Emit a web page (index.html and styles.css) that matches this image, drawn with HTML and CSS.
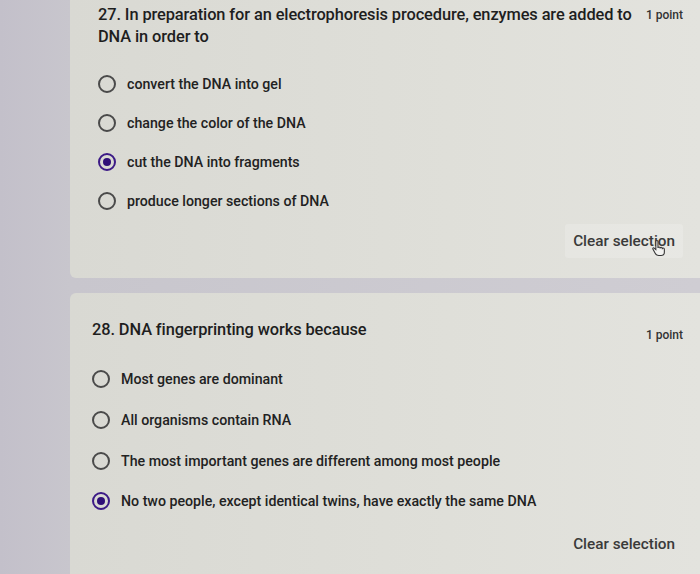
FILE: index.html
```html
<!DOCTYPE html>
<html>
<head>
<meta charset="utf-8">
<link rel="stylesheet" href="styles.css">
</head>
<body>
<div class="page">
  <section class="card card-first">
    <div class="q-head">
      <div class="q-title">27. In preparation for an electrophoresis procedure, enzymes are added to DNA in order to</div>
      <div class="points">1 point</div>
    </div>
    <div class="options">
      <div class="opt"><span class="radio"></span><span class="label">convert the DNA into gel</span></div>
      <div class="opt"><span class="radio"></span><span class="label">change the color of the DNA</span></div>
      <div class="opt"><span class="radio checked"></span><span class="label">cut the DNA into fragments</span></div>
      <div class="opt"><span class="radio"></span><span class="label">produce longer sections of DNA</span></div>
    </div>
    <div class="clear-row">
      <div class="clear hover">Clear selection
        <svg class="cursor" width="15" height="17" viewBox="0 0 14 16"><path d="M4.5 1.5v7.5l-1.6-1.4c-.6-.5-1.5 0-1.2.8l2.3 4.2c.6 1.2 1.8 2 3.2 2h2.3c1.7 0 3-1.3 3-3V8.6c0-.6-.5-1-1-1s-1 .4-1 1V7.9c0-.6-.5-1-1-1s-1 .4-1 1v-.4c0-.6-.5-1-1-1s-1 .4-1 1V1.5c0-.6-.4-1-1-1s-1 .4-1 1z" fill="#f2f2f0" stroke="#333" stroke-width="1"/></svg>
      </div>
    </div>
  </section>
  <section class="card card-second">
    <div class="q-head">
      <div class="q-title">28. DNA fingerprinting works because</div>
      <div class="points low">1 point</div>
    </div>
    <div class="options wide">
      <div class="opt"><span class="radio"></span><span class="label">Most genes are dominant</span></div>
      <div class="opt"><span class="radio"></span><span class="label">All organisms contain RNA</span></div>
      <div class="opt"><span class="radio"></span><span class="label">The most important genes are different among most people</span></div>
      <div class="opt"><span class="radio checked"></span><span class="label">No two people, except identical twins, have exactly the same DNA</span></div>
    </div>
    <div class="clear-row">
      <div class="clear">Clear selection</div>
    </div>
  </section>
</div>
</body>
</html>
```
FILE: styles.css
```css
html, body {
  margin: 0;
  padding: 0;
}
body {
  background: linear-gradient(90deg, #c3c0ca 0%, #c8c6cd 10%, #cfcdd3 100%);
  font-family: Roboto, "Liberation Sans", sans-serif;
  color: #222;
  width: 700px;
  height: 574px;
  overflow: hidden;
}
.page {
  padding-left: 70px;
  display: flex;
  flex-direction: column;
  gap: 15px;
}
.card {
  background: linear-gradient(90deg, #d9d9d3 0%, #dfdfd9 60%, #e3e3de 100%);
  border-radius: 0 0 0 6px;
  box-sizing: border-box;
}
.card-first {
  height: 278px;
  padding: 4px 17px 0 28px;
}
.card-second {
  height: 290px;
  border-radius: 6px 0 0 0;
  padding: 26px 17px 0 22px;
}
.q-head {
  display: flex;
  justify-content: space-between;
  align-items: flex-start;
}
.q-title {
  font-size: 16.4px;
  line-height: 22px;
  font-weight: 500;
  color: #1e1e1e;
  max-width: 545px;
  letter-spacing: -0.1px;
}
.points {
  font-size: 12px;
  line-height: 22px;
  color: #333;
  font-weight: 500;
}
.points.low {
  margin-top: 5px;
}
.options {
  margin-top: 16px;
  display: flex;
  flex-direction: column;
}
.options.wide {
  margin-top: 13px;
}
.opt {
  height: 39px;
  display: flex;
  align-items: center;
  gap: 11px;
}
.options.wide .opt {
  height: 40.7px;
}
.radio {
  width: 14px;
  height: 14px;
  border: 2px solid #4a4a4a;
  border-radius: 50%;
  flex: none;
  position: relative;
}
.radio.checked {
  border-color: #3c1a86;
}
.radio.checked::after {
  content: "";
  position: absolute;
  left: 3px;
  top: 3px;
  width: 8px;
  height: 8px;
  border-radius: 50%;
  background: #2f0f78;
}
.label {
  font-size: 14.2px;
  font-weight: 500;
  color: #222;
}
.clear-row {
  display: flex;
  justify-content: flex-end;
}
.card-first .clear-row {
  margin-top: 4px;
}
.card-second .clear-row {
  margin-top: 5px;
}
.clear {
  position: relative;
  height: 34px;
  line-height: 34px;
  padding: 0 8px;
  font-size: 15.3px;
  font-weight: 500;
  color: #3a3a3a;
  border-radius: 3px;
}
.clear.hover {
  background: rgba(255, 255, 255, 0.18);
}
.cursor {
  position: absolute;
  left: 86px;
  top: 16px;
}
```
